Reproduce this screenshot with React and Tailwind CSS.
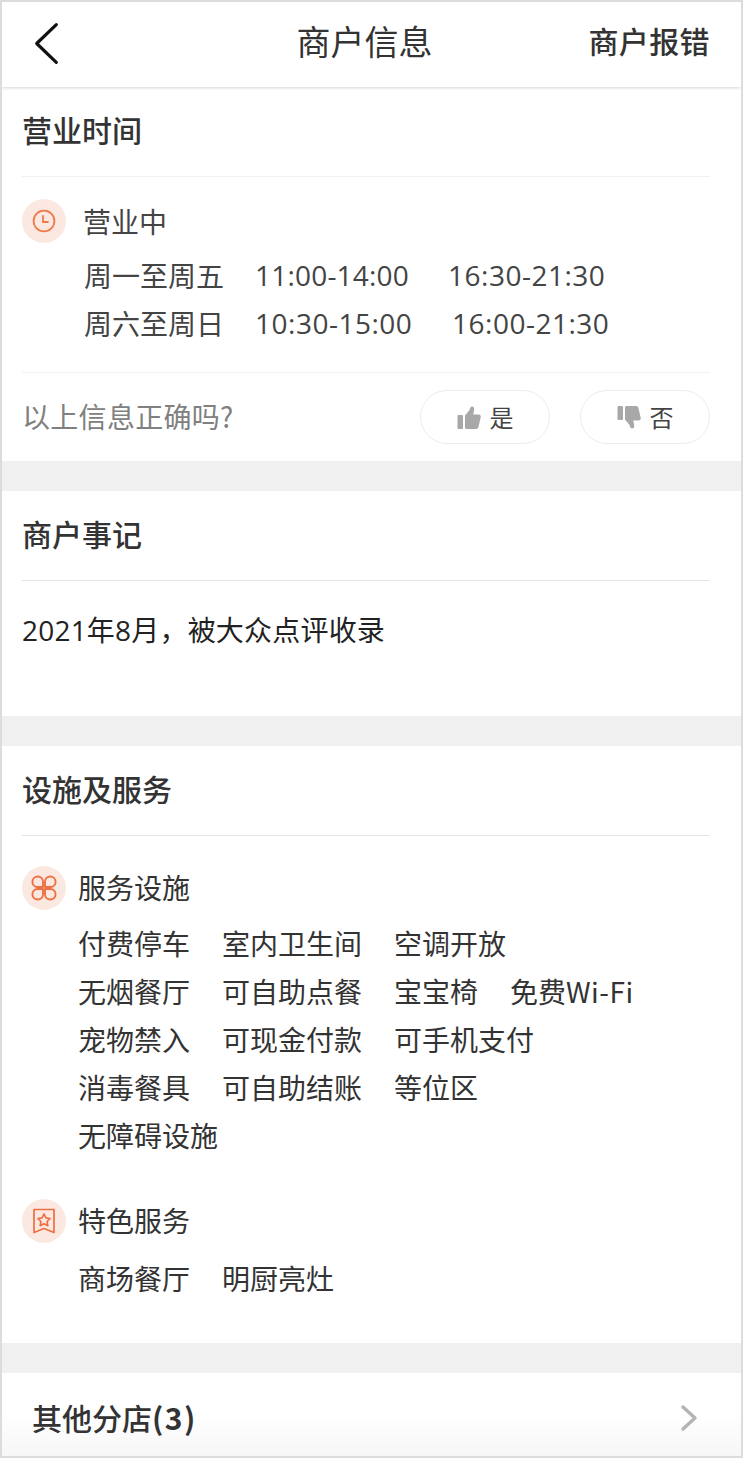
import React from 'react';

const font = { fontFamily: '"Noto Sans CJK SC", sans-serif' };
const latin = { fontFamily: '"Open Sans", "Noto Sans CJK SC", sans-serif' };

const IconBadge = ({ children }) => (
  <div className="flex h-[44px] w-[44px] shrink-0 items-center justify-center rounded-full bg-[#fbe9e1]">
    {children}
  </div>
);

const ClockIcon = () => (
  <svg width="24" height="24" viewBox="0 0 24 24" fill="none" stroke="#f0784a" strokeWidth="1.8" strokeLinecap="round" strokeLinejoin="round">
    <circle cx="12" cy="12" r="10.4" />
    <path d="M11 7v6h5" />
  </svg>
);

const ServiceIcon = () => (
  <svg width="28" height="26" viewBox="0 0 28 26" fill="none" stroke="#ee6f43" strokeWidth="1.9" strokeLinejoin="round">
    <path d="M13 12H7A5.300 5.300 0 1 1 13 6.500Z" />
    <path d="M15 12h6a5.300 5.300 0 1 0-6-5.500Z" />
    <path d="M13 14H7a5.300 5.300 0 1 0 6 5.500Z" />
    <path d="M15 14h6a5.300 5.300 0 1 1-6 5.500Z" />
  </svg>
);

const RibbonIcon = () => (
  <svg width="24" height="26" viewBox="0 0 24 26" fill="none" stroke="#ee6f43" strokeWidth="1.7" strokeLinejoin="round">
    <path d="M2 1.500h20v23l-10-4-10 4Z" />
    <path d="M12 6l1.900 3.900 4.200.6-3 3 .7 4.200-3.800-2-3.800 2 .7-4.200-3-3 4.200-.6Z" />
  </svg>
);

const ThumbUp = () => (
  <svg width="25" height="25" viewBox="0 0 25 25" fill="#a8a8a8">
    <rect x="0.5" y="10" width="5.5" height="14" rx="1" />
    <path d="M8 10.500 12.500 5c.6-2 1-3.500 2.500-3.500 2 0 2.600 2 2 4.500l-.8 3.500h5.300c1.600 0 2.600 1.200 2.200 2.800l-2.200 9.500c-.3 1.300-1 2.200-2.500 2.200H9.500C8.600 24 8 23.400 8 22.500Z" />
  </svg>
);

const ThumbDown = () => (
  <svg width="25" height="25" viewBox="0 0 25 25" fill="#a8a8a8" className="rotate-180 -scale-x-100">
    <rect x="0.5" y="10" width="5.5" height="14" rx="1" />
    <path d="M8 10.500 12.500 5c.6-2 1-3.500 2.500-3.500 2 0 2.600 2 2 4.500l-.8 3.500h5.300c1.600 0 2.600 1.200 2.200 2.800l-2.200 9.500c-.3 1.300-1 2.200-2.500 2.200H9.500C8.600 24 8 23.400 8 22.500Z" />
  </svg>
);

const SectionTitle = ({ children, className }) => (
  <div className={`flex h-[90px] items-center border-b text-[30px] font-medium text-[#333] ${className}`}>
    {children}
  </div>
);

const Gap = () => <div className="h-[30px] bg-[#f0f0f0]" />;

const Tag = ({ children, w }) => <span className={w}>{children}</span>;

export default function App() {
  return (
    <div style={font} className="h-[1458px] w-[743px] overflow-hidden border-2 border-[#dcdcdc] bg-white">
      {/* top bar */}
      <div className="relative flex h-[85px] items-center justify-center pb-[8px] pr-[14px] shadow-[0_1px_3px_rgba(0,0,0,0.16)]">
        <svg className="absolute left-[32px] top-[20px]" width="26" height="44" viewBox="0 0 26 44" fill="none" stroke="#111" strokeWidth="3.2" strokeLinecap="round" strokeLinejoin="round">
          <path d="M22.300 2.700 2.700 21.500l19.600 18.800" />
        </svg>
        <span className="text-[34px] text-[#333]">商户信息</span>
        <span className="absolute right-[31px] text-[30px] font-medium tracking-[0.4px] text-[#333]">商户报错</span>
      </div>

      <div className="pl-[20px] pr-[31px]">
        <SectionTitle className="border-[#f1f1f1] pb-[4px]">营业时间</SectionTitle>
        <div className="mt-[22px] flex items-center gap-[17px]">
          <IconBadge><ClockIcon /></IconBadge>
          <span className="text-[28px] text-[#444]">营业中</span>
        </div>
        <div className="mt-[8px] pl-[62px] text-[28px] leading-[48px] text-[#444]">
          <div className="flex"><span className="w-[171px]">周一至周五</span><span style={latin} className="w-[193px] tracking-[0.2px]">11:00-14:00</span><span style={latin} className="tracking-[0.5px]">16:30-21:30</span></div>
          <div className="flex"><span className="w-[171px]">周六至周日</span><span style={latin} className="w-[197px] tracking-[0.5px]">10:30-15:00</span><span style={latin} className="tracking-[0.5px]">16:00-21:30</span></div>
        </div>
        <div className="mt-[25px] flex h-[89px] items-center justify-between border-t border-[#f1f1f1]">
          <span className="pb-[2px] text-[28px] tracking-[0.3px] text-[#808080]">以上信息正确吗?</span>
          <div className="flex gap-[30px]">
            <div className="flex h-[54px] w-[130px] items-center justify-center gap-[8px] rounded-full border border-[#ececec] text-[24px] text-[#444]"><ThumbUp />是</div>
            <div className="flex h-[54px] w-[130px] items-center justify-center gap-[8px] rounded-full border border-[#ececec] text-[24px] text-[#444]"><ThumbDown />否</div>
          </div>
        </div>
      </div>
      <Gap />

      <div className="h-[225px] pl-[20px] pr-[31px]">
        <SectionTitle className="border-[#e4e4e4] pb-[4px]">商户事记</SectionTitle>
        <p style={latin} className="mt-[27px] text-[28px] leading-[44px] tracking-[0.2px] text-[#222]">2021年8月，被大众点评收录</p>
      </div>
      <Gap />

      <div className="h-[597px] pl-[20px] pr-[31px]">
        <SectionTitle className="border-[#e4e4e4] pb-[4px]">设施及服务</SectionTitle>
        <div className="mt-[30px] flex items-center gap-[12px]">
          <IconBadge><ServiceIcon /></IconBadge>
          <span className="pb-[2px] text-[28px] text-[#333]">服务设施</span>
        </div>
        <div className="mt-[9px] flex flex-col pl-[56px] text-[28px] leading-[48px] text-[#333]">
          <div className="flex"><Tag w="w-[144px]">付费停车</Tag><Tag w="w-[172px]">室内卫生间</Tag><Tag>空调开放</Tag></div>
          <div className="flex"><Tag w="w-[144px]">无烟餐厅</Tag><Tag w="w-[172px]">可自助点餐</Tag><Tag w="w-[116px]">宝宝椅</Tag><Tag>免费<span className="tracking-[0.5px]">Wi-Fi</span></Tag></div>
          <div className="flex"><Tag w="w-[144px]">宠物禁入</Tag><Tag w="w-[172px]">可现金付款</Tag><Tag>可手机支付</Tag></div>
          <div className="flex"><Tag w="w-[144px]">消毒餐具</Tag><Tag w="w-[172px]">可自助结账</Tag><Tag>等位区</Tag></div>
          <div className="flex"><Tag>无障碍设施</Tag></div>
        </div>
        <div className="mt-[40px] flex items-center gap-[12px]">
          <IconBadge><RibbonIcon /></IconBadge>
          <span className="pb-[2px] text-[28px] text-[#333]">特色服务</span>
        </div>
        <div className="mt-[11px] flex pl-[56px] text-[28px] leading-[48px] text-[#333]">
          <Tag w="w-[144px]">商场餐厅</Tag><Tag>明厨亮灶</Tag>
        </div>
      </div>
      <Gap />

      <div className="flex h-[83px] items-center justify-between bg-gradient-to-b from-white via-white to-[#f6f6f6] pl-[30px] pr-[43px] pt-[6px]">
        <span className="text-[30px] font-medium text-[#333]">其他分店<span className="font-bold tracking-[1.5px]">(3)</span></span>
        <svg width="18" height="28" viewBox="0 0 18 28" fill="none" stroke="#b4b4b4" strokeWidth="3.4" strokeLinecap="round" strokeLinejoin="round">
          <path d="M3 3l12 11L3 25" />
        </svg>
      </div>
    </div>
  );
}
